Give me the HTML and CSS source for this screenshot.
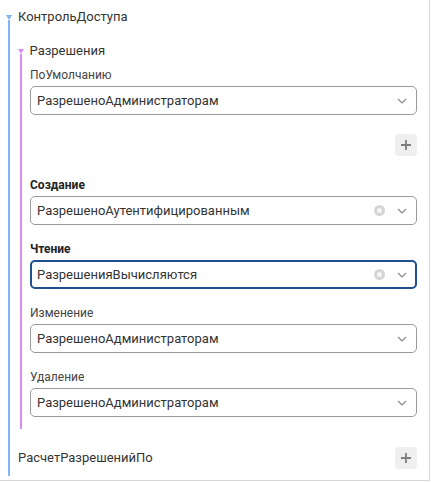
FILE: index.html
```html
<!DOCTYPE html>
<html lang="ru">
<head>
<meta charset="utf-8">
<link rel="stylesheet" href="styles.css">
</head>
<body>
<div class="frame">
  <div class="node-head root-head">
    <span class="caret caret-blue"></span>
    <span class="node-title">КонтрольДоступа</span>
  </div>
  <div class="children children-blue">
    <div class="node-head sub-head">
      <span class="caret caret-purple"></span>
      <span class="node-title">Разрешения</span>
    </div>
    <div class="children children-purple">
      <div class="field">
        <div class="label">ПоУмолчанию</div>
        <div class="select">
          <span class="value">РазрешеноАдминистраторам</span>
          <svg class="chev" width="10" height="6" viewBox="0 0 10 6"><path d="M1 1l4 4 4-4" fill="none" stroke="#8a8a8a" stroke-width="1.2"/></svg>
        </div>
        <div class="add-row">
          <button class="add"><svg width="10" height="10" viewBox="0 0 10 10"><path d="M5 0v10M0 5h10" stroke="#7d7d7d" stroke-width="1.8"/></svg></button>
        </div>
      </div>
      <div class="field">
        <div class="label bold">Создание</div>
        <div class="select">
          <span class="value">РазрешеноАутентифицированным</span>
          <svg class="clear" width="11" height="11" viewBox="0 0 10 10"><circle cx="5" cy="5" r="5" fill="#d6d6d6"/><path d="M3.3 3.3l3.4 3.4M6.7 3.3l-3.4 3.4" stroke="#fff" stroke-width="1.3"/></svg>
          <svg class="chev" width="10" height="6" viewBox="0 0 10 6"><path d="M1 1l4 4 4-4" fill="none" stroke="#8a8a8a" stroke-width="1.2"/></svg>
        </div>
      </div>
      <div class="field">
        <div class="label bold">Чтение</div>
        <div class="select focused">
          <span class="value">РазрешенияВычисляются</span>
          <svg class="clear" width="11" height="11" viewBox="0 0 10 10"><circle cx="5" cy="5" r="5" fill="#d6d6d6"/><path d="M3.3 3.3l3.4 3.4M6.7 3.3l-3.4 3.4" stroke="#fff" stroke-width="1.3"/></svg>
          <svg class="chev" width="10" height="6" viewBox="0 0 10 6"><path d="M1 1l4 4 4-4" fill="none" stroke="#8a8a8a" stroke-width="1.2"/></svg>
        </div>
      </div>
      <div class="field">
        <div class="label">Изменение</div>
        <div class="select">
          <span class="value">РазрешеноАдминистраторам</span>
          <svg class="chev" width="10" height="6" viewBox="0 0 10 6"><path d="M1 1l4 4 4-4" fill="none" stroke="#8a8a8a" stroke-width="1.2"/></svg>
        </div>
      </div>
      <div class="field">
        <div class="label">Удаление</div>
        <div class="select">
          <span class="value">РазрешеноАдминистраторам</span>
          <svg class="chev" width="10" height="6" viewBox="0 0 10 6"><path d="M1 1l4 4 4-4" fill="none" stroke="#8a8a8a" stroke-width="1.2"/></svg>
        </div>
      </div>
    </div>
    <div class="prop-row">
      <span class="node-title">РасчетРазрешенийПо</span>
      <button class="add"><svg width="10" height="10" viewBox="0 0 10 10"><path d="M5 0v10M0 5h10" stroke="#7d7d7d" stroke-width="1.8"/></svg></button>
    </div>
  </div>
</div>
</body>
</html>
```

FILE: styles.css
```css
* { box-sizing: border-box; }
html, body { margin: 0; padding: 0; background: #fff; }
body {
  font-family: Roboto, "Liberation Sans", sans-serif;
  color: #333;
}
.frame {
  width: 430px;
  height: 481px;
  border-right: 1px solid #d9d9d9;
  border-bottom: 1px solid #d9d9d9;
  padding: 7px 12px 0 6px;
  overflow: hidden;
}
.node-head {
  display: flex;
  align-items: center;
  height: 20px;
  gap: 6px;
}
.node-title { font-size: 13px; line-height: 20px; color: #333; }
.caret {
  width: 0;
  height: 0;
  border-left: 3px solid transparent;
  border-right: 3px solid transparent;
  border-top: 5px solid #7fb4f5;
  flex: none;
}
.caret-purple {
  border-left-width: 3.5px;
  border-right-width: 3.5px;
  border-top-color: #d98ef3;
  margin-left: -0.5px;
}
.children {
  margin-left: 2px;
  border-left: 2px solid #7fb4f5;
  padding-left: 8px;
}
.children-blue {
  margin-top: -7px;
  padding-top: 21px;
  padding-bottom: 7px;
}
.children-purple {
  border-left-color: #d98ef3;
  margin-top: -7px;
  padding-top: 13px;
  padding-bottom: 12px;
  display: flex;
  flex-direction: column;
  gap: 16px;
}
.field { display: flex; flex-direction: column; }
.label {
  font-size: 12px;
  line-height: 16px;
  color: #444;
  margin-bottom: 3px;
}
.label.bold { font-weight: 700; color: #222; }
.select {
  height: 29px;
  border: 1px solid #9a9a9a;
  border-radius: 5px;
  display: flex;
  align-items: center;
  padding: 0 9px 0 6px;
  gap: 12px;
}
.select.focused {
  border: 2px solid #1f4f8f;
  padding-left: 5px;
  padding-right: 8px;
}
.value { flex: 1; font-size: 13px; color: #333; white-space: nowrap; }
.clear, .chev { flex: none; }
.add-row {
  display: flex;
  justify-content: flex-end;
  margin-top: 19px;
  margin-bottom: 5px;
}
.add {
  width: 22px;
  height: 22px;
  border: none;
  border-radius: 4px;
  background: #efefef;
  padding: 0;
  display: flex;
  align-items: center;
  justify-content: center;
}
.prop-row {
  display: flex;
  justify-content: space-between;
  align-items: center;
  margin-top: 18px;
  height: 22px;
}
```
